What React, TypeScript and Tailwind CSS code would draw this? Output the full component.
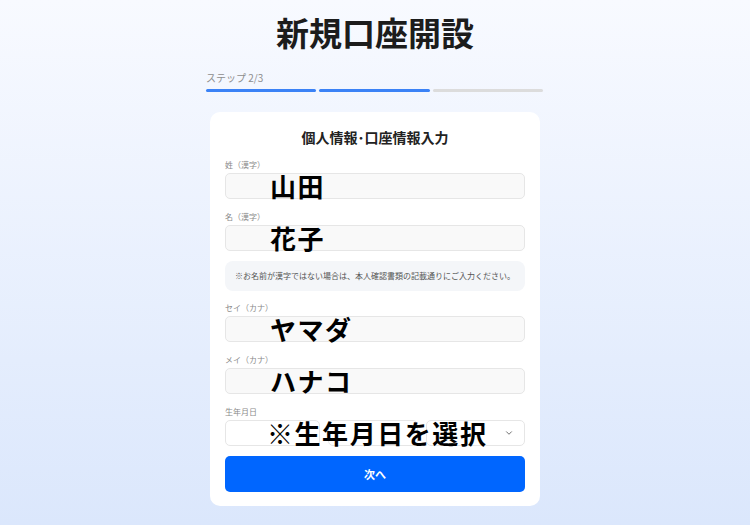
import { ChevronDown } from "lucide-react";

const font = { fontFamily: '"Noto Sans CJK JP", "Noto Sans", sans-serif' };

function Field({ label, value }: { label: string; value: string }) {
  return (
    <div className="flex flex-col">
      <div className="text-[8px] leading-[11px] text-[#8a8a8a] mb-[3px]">{label}</div>
      <div className="relative h-[26px] rounded-[5px] border border-[#e6e6e6] bg-[#f9f9f9]">
        <div className="absolute inset-y-0 left-[44px] flex items-center text-[26px] font-bold text-black tracking-[0.06em] leading-none whitespace-nowrap">
          {value}
        </div>
      </div>
    </div>
  );
}

export default function App() {
  return (
    <div
      className="w-[750px] h-[525px] overflow-hidden bg-linear-to-b from-[#f8faff] to-[#dbe7fc] flex flex-col items-center"
      style={font}
    >
      <h1 className="mt-[11px] text-[33px] leading-[42px] font-bold text-[#1c1c1c]">新規口座開設</h1>
      <div className="w-[337px] mt-[19px] ml-[-1px]">
        <div className="text-[10px] leading-[12px] text-[#8d8d8d]">ステップ 2/3</div>
        <div className="mt-[5px] flex gap-[3px]">
          <div className="flex-1 h-[3px] rounded-full bg-[#3b82f6]"></div>
          <div className="flex-1 h-[3px] rounded-full bg-[#3b82f6]"></div>
          <div className="flex-1 h-[3px] rounded-full bg-[#dcdcdc]"></div>
        </div>
      </div>
      <div className="mt-[20px] w-[330px] rounded-[10px] bg-white px-[15px] pt-[15px] pb-[14px] flex flex-col">
        <h2 className="text-center text-[14px] leading-[20px] font-semibold text-[#222] mb-[12px]">
          個人情報･口座情報入力
        </h2>
        <div className="flex flex-col gap-[12px]">
          <Field label="姓（漢字）" value="山田" />
          <Field label="名（漢字）" value="花子" />
        </div>
        <div className="mt-[10px] h-[30px] rounded-[8px] bg-[#f4f6f9] flex items-center justify-center text-[8px] text-[#555]">
          ※お名前が漢字ではない場合は、本人確認書類の記載通りにご入力ください。
        </div>
        <div className="mt-[11px] flex flex-col gap-[12px]">
          <Field label="セイ（カナ）" value="ヤマダ" />
          <Field label="メイ（カナ）" value="ハナコ" />
          <div className="flex flex-col">
            <div className="text-[8px] leading-[11px] text-[#8a8a8a] mb-[3px]">生年月日</div>
            <div className="relative flex gap-[8px] h-[26px]">
              <div className="w-[95px] rounded-[5px] border border-[#e6e6e6] bg-white"></div>
              <div className="flex-1 rounded-[5px] border border-[#e6e6e6] bg-white"></div>
              <div className="flex-1 rounded-[5px] border border-[#e6e6e6] bg-white flex items-center justify-end pr-[10px]">
                <ChevronDown size={10} strokeWidth={2} className="text-[#555]" />
              </div>
              <div className="absolute inset-y-0 left-[42px] flex items-center text-[26px] font-bold text-black tracking-[0.06em] leading-none whitespace-nowrap">
                ※生年月日を選択
              </div>
            </div>
          </div>
        </div>
        <button className="mt-[10px] h-[36px] rounded-[5px] bg-[#0066ff] text-white text-[11px] font-bold">
          次へ
        </button>
      </div>
    </div>
  );
}
